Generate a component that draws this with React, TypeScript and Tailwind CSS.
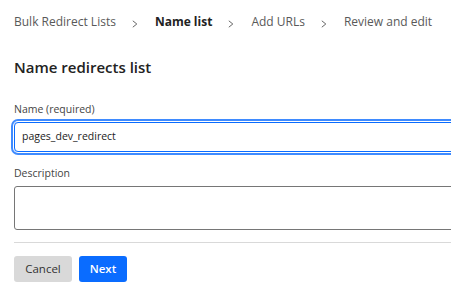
const steps = [
  { label: 'Bulk Redirect Lists', active: false },
  { label: 'Name list', active: true },
  { label: 'Add URLs', active: false },
  { label: 'Review and edit', active: false },
];

function Chevron() {
  return (
    <svg width="6" height="8" viewBox="0 0 6 8" className="ml-[16px] mr-[17px] mt-[3px]" fill="none">
      <polyline points="0.8,0.8 4.8,4 0.8,7.2" stroke="#666" strokeWidth="1" />
    </svg>
  );
}

export default function App() {
  return (
    <div className="w-[451px] h-[296px] overflow-hidden bg-white pl-[14px] pt-[13px] font-['Open_Sans',sans-serif] text-[#313131]">
      {/* Breadcrumb */}
      <nav className="flex items-center h-[18px] text-[12px] whitespace-nowrap">
        {steps.map((step, i) => (
          <div key={step.label} className="flex items-center">
            <span className={step.active ? 'font-bold text-[#222]' : 'text-[#595959]'}>{step.label}</span>
            {i < steps.length - 1 && <Chevron />}
          </div>
        ))}
      </nav>

      {/* Heading */}
      <h2 className="mt-[26px] text-[15px] leading-[20px] font-semibold text-[#222]">Name redirects list</h2>

      {/* Name field */}
      <label className="block mt-[25px] text-[10.5px] leading-[14px] text-[#444]">Name (required)</label>
      <div className="mt-[6px] w-[520px] h-[30px] rounded-[4px] border border-[#0a6cff] ring-2 ring-[#3f8bff] ring-offset-1 flex items-center pl-[7px] text-[10.5px] text-[#222]">
        pages_dev_redirect
      </div>

      {/* Description */}
      <label className="block mt-[14px] text-[10.5px] leading-[14px] text-[#444]">Description</label>
      <div className="mt-[6px] w-[520px] h-[44px] rounded-[3px] border border-[#767676]" />

      <div className="mt-[12px] w-[520px] border-t border-[#d9d9d9]" />

      {/* Actions */}
      <div className="flex gap-[7px] mt-[13px]">
        <button className="w-[58px] h-[26px] rounded-[3px] bg-[#d9d9d9] text-[11.5px] text-[#333]">Cancel</button>
        <button className="w-[48px] h-[26px] rounded-[3px] bg-[#0a6cff] text-[11.5px] font-semibold text-white">Next</button>
      </div>
    </div>
  );
}
